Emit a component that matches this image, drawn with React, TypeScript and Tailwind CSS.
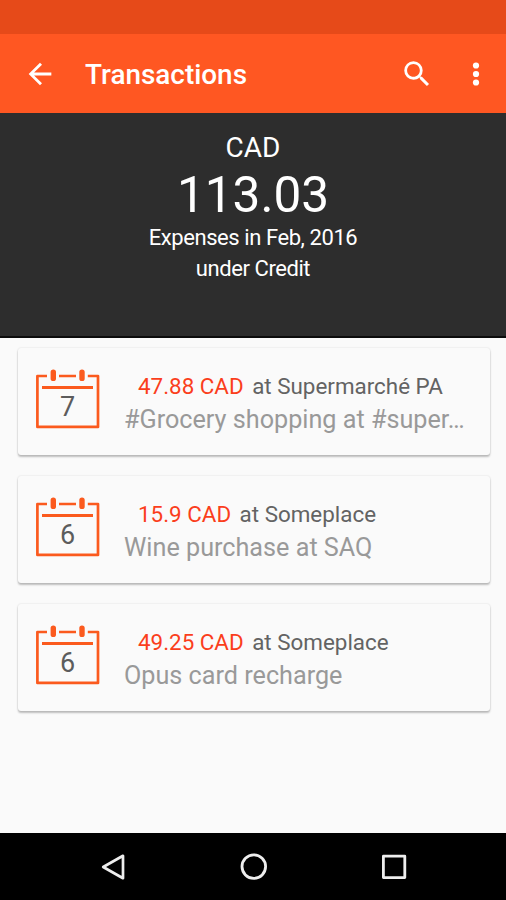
import React from "react";

type Transaction = {
  day: number;
  amount: string;
  place: string;
  note: string;
};

const transactions: Transaction[] = [
  { day: 7, amount: "47.88 CAD", place: "at Supermarché PA", note: "#Grocery shopping at #super…" },
  { day: 6, amount: "15.9 CAD", place: "at Someplace", note: "Wine purchase at SAQ" },
  { day: 6, amount: "49.25 CAD", place: "at Someplace", note: "Opus card recharge" },
];

function CalendarDay({ day }: { day: number }) {
  return (
    <div className="relative h-[60px] w-16 shrink-0">
      <svg viewBox="0 0 64 60" className="block h-[60px] w-16" fill="none" stroke="#fb5a1e">
        <path
          d="M11 7H1.4V57.9H62V7H51.8M23 7H40"
          strokeWidth="2.7"
          strokeLinejoin="round"
        />
        <path d="M6 18.5H57" strokeWidth="2.8" />
        <path d="M17.3 3.1V9.4M46 3.1V9.4" strokeWidth="5.4" strokeLinecap="round" />
      </svg>
      <span className="absolute top-[22px] right-px left-0 text-center text-[27px] leading-8 text-[#5c5c5c]">{day}</span>
    </div>
  );
}

function TransactionCard({ item }: { item: Transaction }) {
  return (
    <li className="flex h-[107px] rounded-[3px] bg-[#fafafa] pt-[21px] pl-[18px] shadow-[0_2px_2px_rgba(0,0,0,0.24),0_0_2px_rgba(0,0,0,0.14)]">
      <CalendarDay day={item.day} />
      <div className="ml-6 w-[350px] pt-0.5">
        <p className="flex h-8 items-center gap-[8.5px] pl-3.5 text-[22.4px] whitespace-nowrap">
          <span className="text-[#fa3e1c]">{item.amount}</span>
          <span className="text-[#636363]">{item.place}</span>
        </p>
        <p className="h-[33px] text-[25.2px] leading-[33px] whitespace-nowrap text-[#999]">{item.note}</p>
      </div>
    </li>
  );
}

export default function App() {
  return (
    <div className="flex h-[900px] w-[506px] flex-col overflow-hidden bg-[#fafafa] font-['Roboto',sans-serif]">
      <div className="h-[34px] shrink-0 bg-[#e64a19]" />
      <header className="flex h-[79px] shrink-0 items-center bg-[#ff5722] text-white">
        <svg viewBox="0 0 24 24" className="ml-[23px] h-[34px] w-[34px]" fill="#fff">
          <path d="M20 11H7.83l5.59-5.59L12 4l-8 8 8 8 1.41-1.41L7.83 13H20v-2z" />
        </svg>
        <h1 className="ml-7 pt-0.5 text-[27.9px] font-medium">Transactions</h1>
        <svg viewBox="0 0 24 24" className="ml-auto h-[34px] w-[34px]" fill="#fff">
          <path d="M15.5 14h-.79l-.28-.27A6.47 6.47 0 0 0 16 9.5 6.5 6.5 0 1 0 9.5 16c1.61 0 3.09-.59 4.23-1.57l.27.28v.79l5 4.99L20.49 19l-4.99-5zm-6 0C7.01 14 5 11.99 5 9.5S7.01 5 9.5 5 14 7.01 14 9.5 11.99 14 9.5 14z" />
        </svg>
        <svg viewBox="0 0 24 24" className="mr-[13px] ml-[25px] h-[34px] w-[34px]" fill="#fff">
          <circle cx="12" cy="6" r="2.2" />
          <circle cx="12" cy="12" r="2.2" />
          <circle cx="12" cy="18" r="2.2" />
        </svg>
      </header>

      <section className="flex h-[225px] shrink-0 flex-col items-center border-b-2 border-[#0c0c0c] bg-[#2d2d2d] pt-[17px] text-white">
        <p className="text-[28px] leading-9">CAD</p>
        <p className="text-[49.5px] leading-[59px]">113.03</p>
        <p className="-mt-[3px] text-[22px] leading-[31px] tracking-[-0.43px]">Expenses in Feb, 2016</p>
        <p className="text-[22px] leading-[31px] tracking-[-0.43px]">under Credit</p>
      </section>

      <main className="flex-1 pt-2.5 pr-4 pl-[18px]">
        <ul className="flex flex-col gap-[21px]">
          {transactions.map((item) => (
            <TransactionCard key={item.amount} item={item} />
          ))}
        </ul>
      </main>

      <nav className="flex h-[67px] shrink-0 items-center justify-between bg-black pr-[98px] pl-[99px]">
        <svg viewBox="0 0 28 28" className="h-7 w-7" fill="none" stroke="#eee" strokeWidth="2.7" strokeLinejoin="round">
          <path d="M24 2.8V25.2L4.2 14Z" />
        </svg>
        <svg viewBox="0 0 28 28" className="h-7 w-7" fill="none" stroke="#eee" strokeWidth="2.8">
          <circle cx="13.8" cy="13.6" r="11.8" />
        </svg>
        <svg viewBox="0 0 28 28" className="h-7 w-7" fill="none" stroke="#eee" strokeWidth="2.8" strokeLinejoin="round">
          <rect x="3.4" y="3.2" width="21.4" height="21.4" />
        </svg>
      </nav>
    </div>
  );
}
